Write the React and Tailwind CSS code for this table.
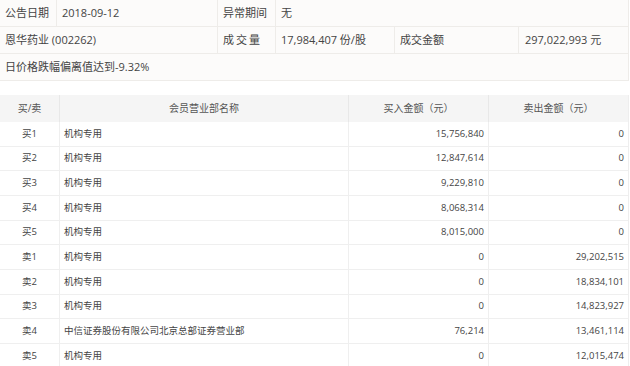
const rows = [
  ['买1', '机构专用', '15,756,840', '0'],
  ['买2', '机构专用', '12,847,614', '0'],
  ['买3', '机构专用', '9,229,810', '0'],
  ['买4', '机构专用', '8,068,314', '0'],
  ['买5', '机构专用', '8,015,000', '0'],
  ['卖1', '机构专用', '0', '29,202,515'],
  ['卖2', '机构专用', '0', '18,834,101'],
  ['卖3', '机构专用', '0', '14,823,927'],
  ['卖4', '中信证券股份有限公司北京总部证券营业部', '76,214', '13,461,114'],
  ['卖5', '机构专用', '0', '12,015,474'],
];

const font = { fontFamily: '"Open Sans", "Noto Sans CJK SC", sans-serif' };

export default function App() {
  return (
    <div className="w-[630px] h-[366px] overflow-hidden bg-white text-[#444]" style={font}>
      {/* 概要 */}
      <div className="w-[629px] bg-[#fcfbfa] border-r border-[#eeece9] text-[11px]">
        <div className="flex h-[27px] border-b border-[#eeece9]">
          <div className="w-[57px] flex items-center pl-[5px] border-r border-[#eeece9]">公告日期</div>
          <div className="w-[161px] flex items-center pl-[5px] border-r border-[#eeece9]">2018-09-12</div>
          <div className="w-[58px] flex items-center pl-[5px] border-r border-[#eeece9]">异常期间</div>
          <div className="flex-1 flex items-center pl-[5px]">无</div>
        </div>
        <div className="flex h-[27px] border-b border-[#eeece9]">
          <div className="w-[218px] flex items-center pl-[5px] border-r border-[#eeece9]">恩华药业 (002262)</div>
          <div className="w-[58px] flex items-center pl-[5px] border-r border-[#eeece9] tracking-[2px]">成交量</div>
          <div className="w-[119px] flex items-center pl-[5px] border-r border-[#eeece9]">17,984,407 份/股</div>
          <div className="w-[124px] flex items-center pl-[5px] border-r border-[#eeece9]">成交金额</div>
          <div className="flex-1 flex items-center pl-[6px]">297,022,993 元</div>
        </div>
        <div className="flex h-[27px] items-center pl-[5px] border-b border-[#eeece9]">日价格跌幅偏离值达到-9.32%</div>
      </div>

      {/* 明细 */}
      <div className="mt-[14px] w-[629px] border-r border-[#eeeeee] text-[9.5px]">
        <div className="flex h-[27px] bg-[#f5f5f5] text-[10px] text-[#555]">
          <div className="w-[60px] flex items-center justify-center border-r border-[#e8e8e8]">买/卖</div>
          <div className="w-[289px] flex items-center justify-center border-r border-[#e8e8e8]">会员营业部名称</div>
          <div className="w-[140px] flex items-center justify-center border-r border-[#e8e8e8]">买入金额（元）</div>
          <div className="flex-1 flex items-center justify-center">卖出金额（元）</div>
        </div>
        {rows.map((r) => (
          <div key={r[0]} className="flex h-[24.67px] border-b border-[#efefef]">
            <div className="w-[60px] flex items-center justify-center border-r border-[#efefef]">{r[0]}</div>
            <div className="w-[289px] flex items-center pl-[4px] border-r border-[#efefef]">{r[1]}</div>
            <div className="w-[140px] flex items-center justify-end pr-[4px] border-r border-[#efefef]">{r[2]}</div>
            <div className="flex-1 flex items-center justify-end pr-[4px]">{r[3]}</div>
          </div>
        ))}
      </div>
    </div>
  );
}
